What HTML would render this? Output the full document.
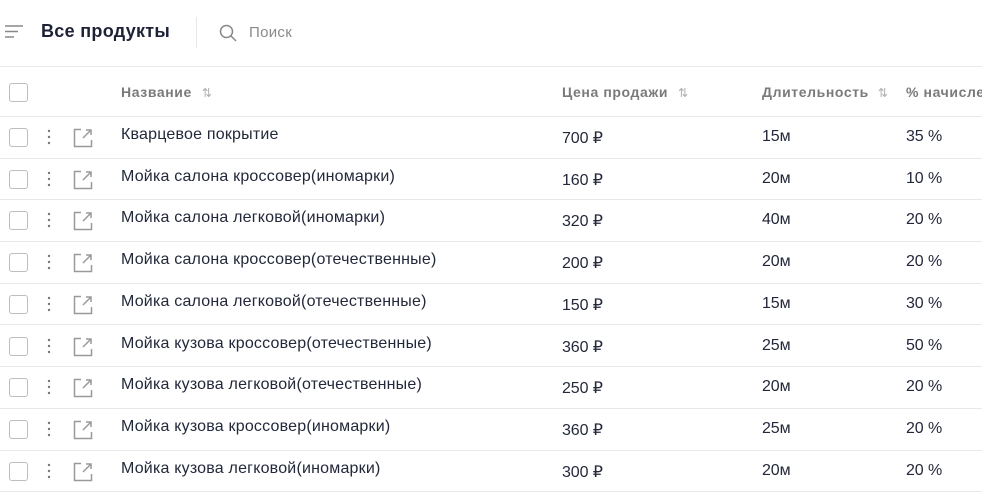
<!DOCTYPE html>
<html><head><meta charset="utf-8"><style>
*{margin:0;padding:0;box-sizing:border-box}
body{width:982px;height:490px;overflow:hidden;background:#fff;font-family:"Liberation Sans",sans-serif;color:#23283a;position:relative}
.top{position:absolute;left:0;top:0;width:982px;height:67px;border-bottom:1px solid #e8e8e8}
.title{position:absolute;left:41px;top:21px;font-size:18px;font-weight:bold;color:#1e2235;letter-spacing:0.3px}
.sep{position:absolute;left:196px;top:17px;width:1px;height:31px;background:#e6e6e6}
.search{position:absolute;left:249px;top:24px;font-size:15px;color:#8a8a8a;letter-spacing:0.3px}
.row{position:absolute;left:0;width:982px;border-bottom:1px solid #e8e8e8;height:41.7px}
.cb{position:absolute;left:9px;width:19px;height:19px;border:1.5px solid #bdbdbd;border-radius:3px}
.c{position:absolute;font-size:16px;white-space:nowrap;letter-spacing:-0.1px}
.n{letter-spacing:0.2px}
.h{font-size:14px;font-weight:bold;color:#7a7a7a;letter-spacing:0.6px}
.s{color:#b0b0b0;font-weight:normal;font-size:12px;margin-left:10px}
</style></head><body>
<div class="top">
<svg style="position:absolute;left:5px;top:25px" width="20" height="14"><path d="M0 1H18M0 6.5H13M0 12H9" stroke="#888" stroke-width="1.5"/></svg>
<div class="title">Все продукты</div><div class="sep"></div>
<svg style="position:absolute;left:219px;top:24px" width="20" height="20"><circle cx="7.5" cy="7.5" r="6" fill="none" stroke="#888" stroke-width="1.5"/><path d="M12 12L17 17" stroke="#888" stroke-width="1.5"/></svg>
<div class="search">Поиск</div>
</div>
<div class="row" style="top:67px;height:50px">
<div class="cb" style="top:16px"></div>
<div class="c h" style="left:121px;top:17px">Название<span class="s">⇅</span></div>
<div class="c h" style="left:562px;top:17px">Цена продажи<span class="s">⇅</span></div>
<div class="c h" style="left:762px;top:17px">Длительность<span class="s" style="margin-left:9px">⇅</span></div>
<div class="c h" style="left:906px;top:17px">% начисления</div>
</div>
<div id="rows"></div>
<script>
var d=[["Кварцевое покрытие","700","15м","35"],["Мойка салона кроссовер(иномарки)","160","20м","10"],["Мойка салона легковой(иномарки)","320","40м","20"],["Мойка салона кроссовер(отечественные)","200","20м","20"],["Мойка салона легковой(отечественные)","150","15м","30"],["Мойка кузова кроссовер(отечественные)","360","25м","50"],["Мойка кузова легковой(отечественные)","250","20м","20"],["Мойка кузова кроссовер(иномарки)","360","25м","20"],["Мойка кузова легковой(иномарки)","300","20м","20"]];
var h="";d.forEach(function(r,i){var t=117+i*41.7;
h+='<div class="row" style="top:'+t+'px"><div class="cb" style="top:11px"></div>'+
'<svg style="position:absolute;left:46px;top:12px" width="6" height="18"><circle cx="3" cy="2" r="1.2" fill="#777"/><circle cx="3" cy="8" r="1.2" fill="#777"/><circle cx="3" cy="14" r="1.2" fill="#777"/></svg>'+
'<svg style="position:absolute;left:73px;top:11px" width="20" height="20"><path d="M8 1.5H1.5V18.5H18.5V12" fill="none" stroke="#999" stroke-width="1.5"/><path d="M10 10L18 2M13 2H18V7" fill="none" stroke="#999" stroke-width="1.5"/></svg>'+
'<div class="c n" style="left:121px;top:9px">'+r[0]+'</div><div class="c" style="left:562px;top:11px">'+r[1]+' ₽</div><div class="c" style="left:762px;top:11px">'+r[2]+'</div><div class="c" style="left:906px;top:11px">'+r[3]+' %</div></div>';});
document.getElementById("rows").innerHTML=h;
</script>
</body></html>
